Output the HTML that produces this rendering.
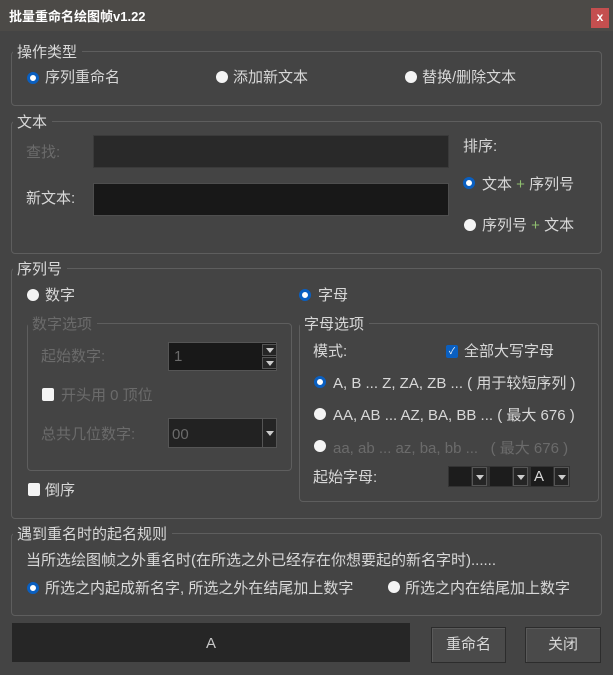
<!DOCTYPE html>
<html><head><meta charset="utf-8"><style>
*{margin:0;padding:0;box-sizing:border-box}
body{width:613px;height:675px;background:#444444;font-family:"Liberation Sans","Noto Sans CJK SC",sans-serif;font-size:15px;color:#d8d8d8;position:relative;overflow:hidden}
.a{position:absolute;white-space:nowrap;line-height:18px}
.t{position:absolute;left:0;top:0;width:613px;height:31px;background:#4c4a47}
.g{position:absolute;border:1px solid #5e5e5e;border-radius:4px}
.lg{position:absolute;background:#444;padding:0 5px 0 4px;line-height:18px;white-space:nowrap}
.r{position:absolute;width:12px;height:12px;border-radius:50%;background:#f4f4f4}
.r.on{background:#fff;border:3px solid #0a5fc0}
.c{position:absolute;width:12px;height:13px;border-radius:2px;background:#f4f4f4}
.d{color:#6b6b6b}
.in{position:absolute;border:1px solid #3a3a3a}
.ar{position:absolute;width:15px;background:#252525;border:1px solid #555}
.ar:after{content:"";position:absolute;left:3px;top:50%;margin-top:-2px;border-left:4px solid transparent;border-right:4px solid transparent;border-top:5px solid #ccc}
.btn{position:absolute;background:#4a4a4a;border:1px solid #2c2c2c;box-shadow:inset 1px 1px 0 #5a5a5a;text-align:center;line-height:34px}
</style></head><body>
<div class="t"></div>
<div class="a" style="left:9px;top:8px;font-size:13px;color:#fff;font-weight:bold">批量重命名绘图帧v1.22</div>
<div class="a" style="left:591px;top:8px;width:18px;height:20px;background:#c44f4f;color:#fff;font-size:12px;text-align:center;line-height:19px;font-weight:bold">x</div>

<div class="g" style="left:11px;top:51px;width:591px;height:55px"></div>
<div class="lg" style="left:13px;top:44px">操作类型</div>
<div class="r on" style="left:27px;top:72px"></div><div class="a" style="left:45px;top:69px">序列重命名</div>
<div class="r" style="left:216px;top:71px"></div><div class="a" style="left:233px;top:69px">添加新文本</div>
<div class="r" style="left:405px;top:71px"></div><div class="a" style="left:422px;top:69px">替换/删除文本</div>

<div class="g" style="left:11px;top:121px;width:591px;height:133px"></div>
<div class="lg" style="left:13px;top:114px">文本</div>
<div class="a d" style="left:26px;top:144px">查找:</div>
<div class="in" style="left:93px;top:135px;width:356px;height:33px;background:#292929"></div>
<div class="a" style="left:26px;top:190px">新文本:</div>
<div class="in" style="left:93px;top:183px;width:356px;height:33px;background:#181818;border-color:#4e4e4e"></div>
<div class="a" style="left:463px;top:138px">排序:</div>
<div class="r on" style="left:463px;top:177px"></div><div class="a" style="left:482px;top:176px">文本 <span style="color:#8fbf6f">+</span> 序列号</div>
<div class="r" style="left:464px;top:219px"></div><div class="a" style="left:482px;top:217px">序列号 <span style="color:#8fbf6f">+</span> 文本</div>

<div class="g" style="left:11px;top:268px;width:591px;height:251px"></div>
<div class="lg" style="left:13px;top:261px">序列号</div>
<div class="r" style="left:27px;top:289px"></div><div class="a" style="left:45px;top:287px">数字</div>
<div class="r on" style="left:299px;top:289px"></div><div class="a" style="left:318px;top:287px">字母</div>

<div class="g" style="left:27px;top:323px;width:265px;height:148px"></div>
<div class="lg d" style="left:28px;top:316px">数字选项</div>
<div class="a d" style="left:41px;top:348px">起始数字:</div>
<div class="in" style="left:168px;top:342px;width:109px;height:29px;background:#181818;border-color:#555"></div>
<div class="a d" style="left:174px;top:348px">1</div>
<div class="ar" style="left:262px;top:344px;height:12px"></div>
<div class="ar" style="left:262px;top:357px;height:12px"></div>
<div class="c" style="left:42px;top:388px"></div><div class="a d" style="left:61px;top:387px">开头用 0 顶位</div>
<div class="a d" style="left:41px;top:426px">总共几位数字:</div>
<div class="in" style="left:168px;top:418px;width:109px;height:30px;background:#222;border-color:#555"></div>
<div class="a d" style="left:172px;top:426px">00</div>
<div class="ar" style="left:262px;top:418px;height:30px"></div>
<div class="c" style="left:28px;top:483px"></div><div class="a" style="left:45px;top:482px">倒序</div>

<div class="g" style="left:299px;top:323px;width:300px;height:179px"></div>
<div class="lg" style="left:300px;top:316px">字母选项</div>
<div class="a" style="left:313px;top:343px">模式:</div>
<div class="c" style="left:446px;top:345px;background:#0a5fc0;color:#fff;font-size:9px;line-height:12px;text-align:center">✓</div>
<div class="a" style="left:464px;top:343px">全部大写字母</div>
<div class="r on" style="left:314px;top:376px"></div><div class="a" style="left:333px;top:375px">A, B ... Z, ZA, ZB ... ( 用于较短序列 )</div>
<div class="r" style="left:314px;top:408px"></div><div class="a" style="left:333px;top:407px">AA, AB ... AZ, BA, BB ... ( 最大 676 )</div>
<div class="r" style="left:314px;top:440px"></div><div class="a d" style="left:333px;top:440px">aa, ab ... az, ba, bb ...&nbsp;&nbsp;&nbsp;( 最大 676 )</div>
<div class="a" style="left:313px;top:469px">起始字母:</div>
<div class="in" style="left:448px;top:466px;width:122px;height:21px;background:#333;border-color:#333"></div>
<div style="position:absolute;left:449px;top:467px;width:22px;height:19px;background:#1c1c1c"></div>
<div class="ar" style="left:472px;top:467px;height:19px"></div>
<div style="position:absolute;left:490px;top:467px;width:22px;height:19px;background:#1c1c1c"></div>
<div class="ar" style="left:513px;top:467px;height:19px"></div>
<div style="position:absolute;left:531px;top:467px;width:22px;height:19px;background:#1c1c1c"></div>
<div class="a" style="left:534px;top:468px">A</div>
<div class="ar" style="left:554px;top:467px;height:19px"></div>

<div class="g" style="left:11px;top:533px;width:591px;height:83px"></div>
<div class="lg" style="left:13px;top:526px">遇到重名时的起名规则</div>
<div class="a" style="left:26px;top:552px">当所选绘图帧之外重名时(在所选之外已经存在你想要起的新名字时)......</div>
<div class="r on" style="left:27px;top:582px"></div><div class="a" style="left:45px;top:580px">所选之内起成新名字, 所选之外在结尾加上数字</div>
<div class="r" style="left:388px;top:581px"></div><div class="a" style="left:405px;top:580px">所选之内在结尾加上数字</div>

<div style="position:absolute;left:12px;top:623px;width:398px;height:39px;background:#262626;color:#c8c8c8;text-align:center;line-height:41px">A</div>
<div class="btn" style="left:431px;top:627px;width:75px;height:36px">重命名</div>
<div class="btn" style="left:525px;top:627px;width:76px;height:36px">关闭</div>
</body></html>
